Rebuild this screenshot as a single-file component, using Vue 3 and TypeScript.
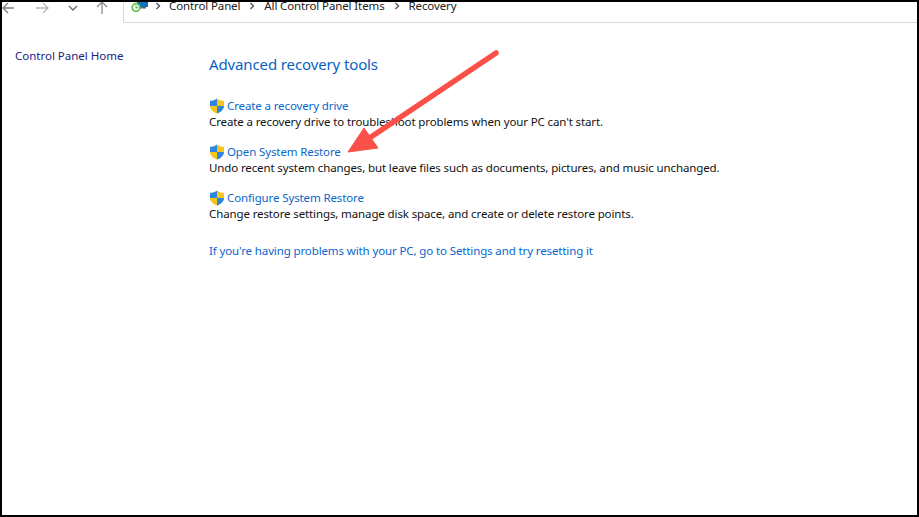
<script setup lang="ts">
interface Task { title: string; desc: string }
const tasks: Task[] = [
  { title: 'Create a recovery drive', desc: "Create a recovery drive to troubleshoot problems when your PC can't start." },
  { title: 'Open System Restore', desc: 'Undo recent system changes, but leave files such as documents, pictures, and music unchanged.' },
  { title: 'Configure System Restore', desc: 'Change restore settings, manage disk space, and create or delete restore points.' },
]
</script>

<template>
  <div class="window">
    <header class="toolbar">
      <nav class="nav">
        <svg class="nav-icon back" width="12" height="12" viewBox="0 0 12 12"><path d="M12 6H1M6 1 1 6l5 5" /></svg>
        <svg class="nav-icon fwd" width="13" height="12" viewBox="0 0 13 12"><path d="M0 6h12M7 1l5 5-5 5" /></svg>
        <svg class="nav-icon chev" width="10" height="6" viewBox="0 0 10 6"><path d="M1 1l4 4 4-4" /></svg>
        <svg class="nav-icon up" width="12" height="13" viewBox="0 0 12 13"><path d="M6 13V1M1 6l5-5 5 5" /></svg>
      </nav>
      <div class="address">
        <svg class="cp-icon" width="17" height="14" viewBox="0 0 17 14">
          <rect x="6" y="-1" width="11" height="9" fill="#0f6fc0" />
          <rect x="8" y="8" width="7" height="1.500" fill="#5a6a78" />
          <circle cx="5" cy="8.500" r="3.800" fill="#fff" stroke="#62c24e" stroke-width="1.800" />
          <path d="M5 6.500v2.300h2" fill="none" stroke="#4a8f4a" stroke-width="1" />
        </svg>
        <svg class="sep first" width="6" height="8" viewBox="0 0 6 8"><path d="M1.500 1l3 3-3 3" /></svg>
        <span class="crumb">Control Panel</span>
        <svg class="sep" width="6" height="8" viewBox="0 0 6 8"><path d="M1.500 1l3 3-3 3" /></svg>
        <span class="crumb">All Control Panel Items</span>
        <svg class="sep" width="6" height="8" viewBox="0 0 6 8"><path d="M1.500 1l3 3-3 3" /></svg>
        <span class="crumb">Recovery</span>
      </div>
    </header>
    <main class="body">
      <aside class="side"><a class="home">Control Panel Home</a></aside>
      <section class="content">
        <h1>Advanced recovery tools</h1>
        <div class="tasks">
          <div v-for="t in tasks" :key="t.title" class="task">
            <div class="task-title">
              <svg width="16" height="16" viewBox="0 0 16 16">
                <path d="M8 .5C6.200 2 3.500 2.800 1 2.800V8h7z" fill="#2f86dc" />
                <path d="M8 .5c1.800 1.500 4.500 2.300 7 2.300V8H8z" fill="#f7c61e" />
                <path d="M1 8c0 3.500 3 6.200 7 7.500V8z" fill="#f7c61e" />
                <path d="M15 8c0 3.500-3 6.200-7 7.500V8z" fill="#2f86dc" />
              </svg>
              <a class="link">{{ t.title }}</a>
            </div>
            <p>{{ t.desc }}</p>
          </div>
        </div>
        <a class="link reset">If you're having problems with your PC, go to Settings and try resetting it</a>
      </section>
    </main>
    <svg class="arrow" width="919" height="517" viewBox="0 0 919 517">
      <path d="M496 53 L368 139" stroke="#fb5048" stroke-width="5.500" stroke-linecap="round" fill="none" />
      <path d="M348 152 L364 128 L378 148 Z" fill="#fb5048" stroke="#fb5048" stroke-width="1" stroke-linejoin="round" />
    </svg>
  </div>
</template>

<style>
html, body { margin: 0; background: #fff; }
</style>

<style scoped>
.window {
  position: relative;
  box-sizing: border-box;
  width: 919px;
  height: 517px;
  background: #fff;
  border-style: solid;
  border-color: #000;
  border-width: 2px;
  overflow: hidden;
  font-family: "Noto Sans", sans-serif;
  font-size: 11.5px;
  letter-spacing: -0.12px;
  color: #1a1a1a;
}
.toolbar { display: flex; height: 21px; }
.nav { width: 121px; display: flex; align-items: flex-start; position: relative; }
.nav-icon { fill: none; stroke: #8a8a8a; stroke-width: 1.3; flex: none; }
.back { margin: 0; stroke: #7f7f7f; }
.fwd { margin-left: 22px; stroke: #b4b4b4; }
.chev { margin: 3px 0 0 19px; stroke: #6a6a6a; }
.up { margin-left: 18px; stroke: #8a8a8a; margin-top: -1px; }
.address {
  flex: 1;
  display: flex;
  align-items: flex-start;
  border-left: 1px solid #d9d9d9;
  border-bottom: 1px solid #d9d9d9;
  padding-left: 7px;
  line-height: 7px;
  white-space: nowrap;
  color: #222;
}
.cp-icon { margin-top: -3px; flex: none; }
.sep { flex: none; fill: none; stroke: #555; stroke-width: 1.4; margin: 0 9px 0 7px; }
.sep.first { margin: 0 8px 0 7px; }
.crumb { flex: none; }
.crumb + .sep { margin: 0 9px 0 9px; }
.body { display: flex; }
.side { width: 207px; flex: none; padding: 25px 0 0 13px; box-sizing: border-box; }
.home { color: #1a237e; line-height: 16px; display: block; letter-spacing: -0.01px; }
.content { flex: 1; padding-top: 30px; }
h1 { margin: 0; font-size: 15px; font-weight: 400; color: #0a5fc4; line-height: 22px; }
.tasks { margin-top: 22px; display: flex; flex-direction: column; gap: 13px; }
.task p { margin: 0; line-height: 16px; height: 16px; color: #111; white-space: nowrap; }
.task-title { display: flex; align-items: center; gap: 2px; height: 17px; }
.link { color: #0a66cc; }
.reset { display: block; margin-top: 21px; line-height: 16px; }
.arrow { position: absolute; left: -2px; top: -2px; pointer-events: none; }
</style>
